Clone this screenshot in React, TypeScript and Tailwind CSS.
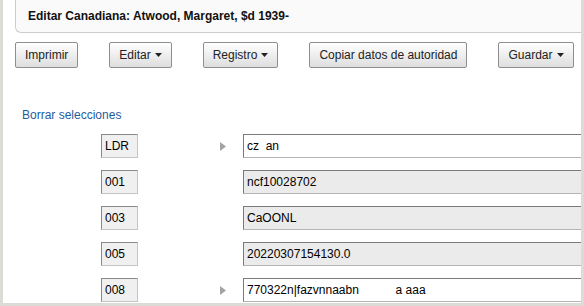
import React from 'react';

const rows: { tag: string; value: string; arrow: boolean; readOnly: boolean }[] = [
  { tag: 'LDR', value: 'cz  an', arrow: true, readOnly: false },
  { tag: '001', value: 'ncf10028702', arrow: false, readOnly: true },
  { tag: '003', value: 'CaOONL', arrow: false, readOnly: true },
  { tag: '005', value: '20220307154130.0', arrow: false, readOnly: true },
  { tag: '008', value: '770322n|fazvnnaabn           a aaa', arrow: true, readOnly: false },
];

function Caret() {
  return (
    <svg width="7" height="4" viewBox="0 0 7 4" className="ml-[4px]">
      <path d="M0 0h7L3.5 4z" fill="#222" />
    </svg>
  );
}

function Btn({ label, menu }: { label: string; menu?: boolean }) {
  return (
    <button className="shrink-0 whitespace-nowrap h-[26px] px-[9px] flex items-center rounded-[2px] border border-[#8e8e8e] bg-gradient-to-b from-[#ffffff] to-[#dedede] text-[12px] text-[#222]">
      {label}
      {menu && <Caret />}
    </button>
  );
}

export default function App() {
  return (
    <div className="w-[584px] h-[306px] bg-[#dcdcd6] px-[3px] pb-[3px]" style={{ fontFamily: '"Liberation Sans", Arial, sans-serif' }}>
      <div className="w-full h-full bg-white overflow-hidden">
        {/* header */}
        <div className="ml-[12px] -mr-[10px] h-[33px] bg-[#fafafa] border-l border-b border-[#cccccc] rounded-bl-[6px] flex items-center pl-[12px] pb-[1px]">
          <span className="text-[12px] font-bold text-[#111] whitespace-nowrap">Editar Canadiana: Atwood, Margaret, $d 1939-</span>
        </div>

        {/* toolbar */}
        <div className="mt-[9px] ml-[12px] flex gap-[31px]">
          <Btn label="Imprimir" />
          <Btn label="Editar" menu />
          <Btn label="Registro" menu />
          <Btn label="Copiar datos de autoridad" />
          <Btn label="Guardar" menu />
        </div>

        <div className="mt-[39px] ml-[19px] text-[12px] leading-[16px] text-[#1f5c9e]">Borrar selecciones</div>

        {/* fields */}
        <div className="mt-[11px] flex flex-col gap-[12px]">
          {rows.map(r => (
            <div key={r.tag} className="flex items-center h-[24px]">
              <div className="shrink-0 ml-[98px] w-[37px] h-[24px] flex items-center pl-[3px] bg-[#f0f0f0] border border-[#8a8a8a] border-b-[#c4c4c4] border-r-[#c4c4c4] text-[12px] text-black">
                {r.tag}
              </div>
              <div className="shrink-0 w-[105px] flex justify-end pr-[17px]">
                {r.arrow && (
                  <svg width="6" height="9" viewBox="0 0 6 9">
                    <path d="M0 0l6 4.5L0 9z" fill="#a3a3a3" />
                  </svg>
                )}
              </div>
              <div
                className={`shrink-0 w-[400px] h-[24px] flex items-center pl-[3px] border border-[#7a7a7a] border-b-[#b5b5b5] text-[12px] text-black whitespace-pre ${r.readOnly ? 'bg-[#ebebeb]' : 'bg-white'}`}
              >
                {r.value}
              </div>
            </div>
          ))}
        </div>
      </div>
    </div>
  );
}
